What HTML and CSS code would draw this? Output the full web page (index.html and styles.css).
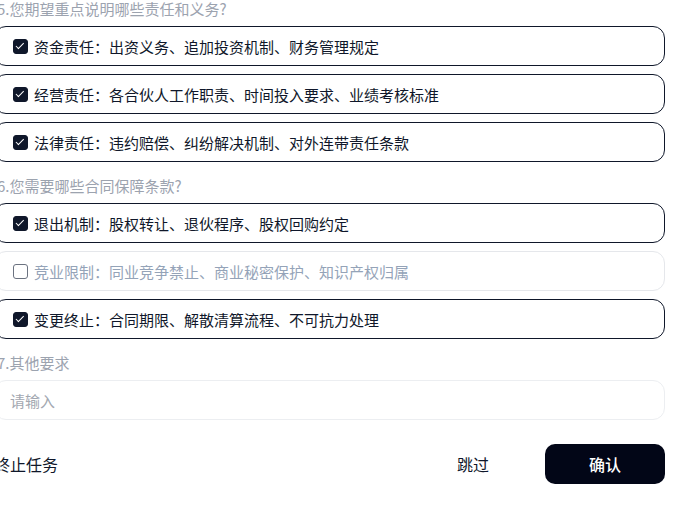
FILE: index.html
```html
<!DOCTYPE html>
<html lang="zh">
  <head>
    <meta charset="UTF-8" />
    <meta name="viewport" content="width=device-width, initial-scale=1.0" />
    <title>合伙协议问卷</title>
    <link rel="stylesheet" href="styles.css">
  </head>
  <body>
    <div class="form">
      <div class="question">
        <p class="label">5.您期望重点说明哪些责任和义务?</p>
        <ul class="options">
          <li class="option on"><span class="box"></span>资金责任：出资义务、追加投资机制、财务管理规定</li>
          <li class="option on"><span class="box"></span>经营责任：各合伙人工作职责、时间投入要求、业绩考核标准</li>
          <li class="option on"><span class="box"></span>法律责任：违约赔偿、纠纷解决机制、对外连带责任条款</li>
        </ul>
      </div>
      <div class="question">
        <p class="label">6.您需要哪些合同保障条款?</p>
        <ul class="options">
          <li class="option on"><span class="box"></span>退出机制：股权转让、退伙程序、股权回购约定</li>
          <li class="option"><span class="box"></span>竞业限制：同业竞争禁止、商业秘密保护、知识产权归属</li>
          <li class="option on"><span class="box"></span>变更终止：合同期限、解散清算流程、不可抗力处理</li>
        </ul>
      </div>
      <div class="question">
        <p class="label">7.其他要求</p>
        <input class="input" type="text" placeholder="请输入" />
      </div>
      <div class="actions">
        <button class="stop">终止任务</button>
        <div class="right">
          <button class="skip">跳过</button>
          <button class="ok">确认</button>
        </div>
      </div>
    </div>
  </body>
</html>
```
FILE: styles.css
```css
* {
  margin: 0;
  padding: 0;
  box-sizing: border-box;
}
ul {
  list-style: none;
}
body {
  font-family: "Noto Sans CJK SC", "Noto Sans", sans-serif;
  font-size: 15px;
  color: #0f172a;
  background: #fff;
}
.form {
  width: 671px;
  margin: -1px 0 0 -6px;
}
.question {
  margin-bottom: 14px;
}
.label {
  font-size: 15px;
  line-height: 20px;
  color: #9ca3af;
  margin-bottom: 7px;
  padding-left: 3px;
}
.options {
  display: flex;
  flex-direction: column;
  gap: 8px;
}
.option {
  height: 40px;
  display: flex;
  align-items: center;
  padding: 0 18px;
  border: 1px solid #0f172a;
  border-radius: 12px;
  color: #0f172a;
}
.option .box {
  flex: none;
  width: 15px;
  height: 15px;
  margin-right: 6px;
  border: 1.5px solid #6b7280;
  border-radius: 3px;
  position: relative;
}
.option.on .box {
  background: #0f172a;
  border-color: #0f172a;
}
.option.on .box::after {
  content: "";
  position: absolute;
  left: 4px;
  top: 1.5px;
  width: 3px;
  height: 6.5px;
  border: solid #fff;
  border-width: 0 1.8px 1.8px 0;
  transform: rotate(45deg);
}
.option:not(.on) {
  border-color: #e5e7eb;
  color: #94a3b8;
}
.input {
  width: 100%;
  height: 40px;
  padding: 0 15px;
  border: 1px solid #eceef1;
  border-radius: 12px;
  font-family: inherit;
  font-size: 15px;
  outline: none;
}
.input::placeholder {
  color: #a3a8b1;
}
.actions {
  display: flex;
  justify-content: space-between;
  align-items: center;
  margin-top: 24px;
}
.actions button {
  font-family: inherit;
  font-size: 16px;
  border: none;
  background: none;
  color: #0f172a;
  cursor: pointer;
}
.right {
  display: flex;
  gap: 12px;
}
.skip,
.ok {
  width: 120px;
  height: 40px;
  border-radius: 10px;
}
.actions .ok {
  background: #020617;
  color: #fff;
  font-weight: 500;
}
```
